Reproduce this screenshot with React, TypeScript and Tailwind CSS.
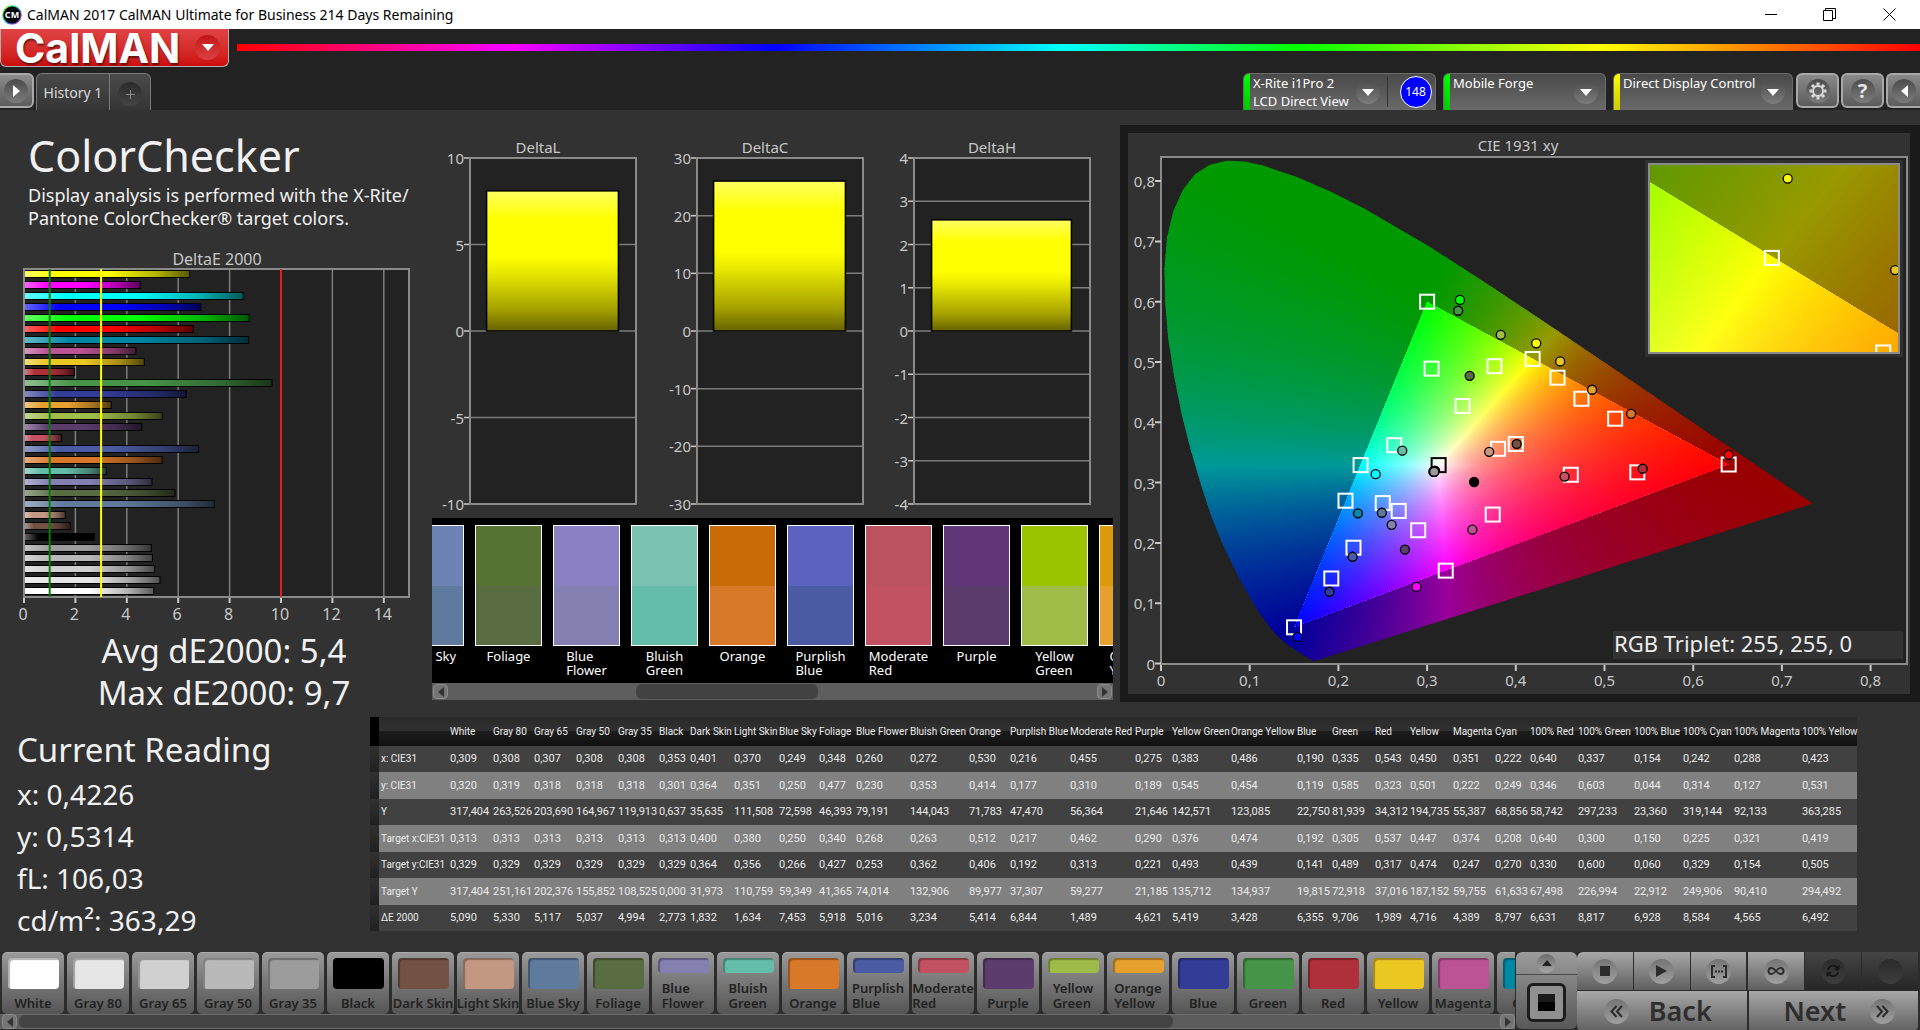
import React from 'react';
import { Infinity as InfinityIcon } from 'lucide-react';
import { FaArrowsRotate } from 'react-icons/fa6';

type Patch = {
  name: string;
  color: string;
  width: number;
  values: string[]; // x, y, Y, target x, target y, target Y, dE
};

const patch = (name: string, color: string, width: number, values: string): Patch => ({
  name,
  color,
  width,
  values: values.split(' '),
});

const patches: Patch[] = [
  patch('White', '#ffffff', 43, '0,309 0,320 317,404 0,313 0,329 317,404 5,090'),
  patch('Gray 80', '#e6e6e6', 41, '0,308 0,319 263,526 0,313 0,329 251,161 5,330'),
  patch('Gray 65', '#d0d0d0', 42, '0,307 0,318 203,690 0,313 0,329 202,376 5,117'),
  patch('Gray 50', '#b9b9b9', 42, '0,308 0,318 164,967 0,313 0,329 155,852 5,037'),
  patch('Gray 35', '#9c9c9c', 41, '0,308 0,318 119,913 0,313 0,329 108,525 4,994'),
  patch('Black', '#000000', 31, '0,353 0,301 0,637 0,313 0,329 0,000 2,773'),
  patch('Dark Skin', '#735244', 44, '0,401 0,364 35,635 0,400 0,364 31,973 1,832'),
  patch('Light Skin', '#c39782', 45, '0,370 0,351 111,508 0,380 0,356 110,759 1,634'),
  patch('Blue Sky', '#5e7a9c', 40, '0,249 0,250 72,598 0,250 0,266 59,349 7,453'),
  patch('Foliage', '#5a6c42', 37, '0,348 0,477 46,393 0,340 0,427 41,365 5,918'),
  patch('Blue Flower', '#8480b1', 54, '0,260 0,230 79,191 0,268 0,253 74,014 5,016'),
  patch('Bluish Green', '#64bda9', 59, '0,272 0,353 144,043 0,263 0,362 132,906 3,234'),
  patch('Orange', '#d87829', 41, '0,530 0,414 71,783 0,512 0,406 89,977 5,414'),
  patch('Purplish Blue', '#4a5ba3', 60, '0,216 0,177 47,470 0,217 0,192 37,307 6,844'),
  patch('Moderate Red', '#c25262', 65, '0,455 0,310 56,364 0,462 0,313 59,277 1,489'),
  patch('Purple', '#5c3c6c', 37, '0,275 0,189 21,646 0,290 0,221 21,185 4,621'),
  patch('Yellow Green', '#9fbb48', 59, '0,383 0,545 142,571 0,376 0,493 135,712 5,419'),
  patch('Orange Yellow', '#e6a02e', 66, '0,486 0,454 123,085 0,474 0,439 134,937 3,428'),
  patch('Blue', '#333c96', 35, '0,190 0,119 22,750 0,192 0,141 19,815 6,355'),
  patch('Green', '#469448', 43, '0,335 0,585 81,939 0,305 0,489 72,918 9,706'),
  patch('Red', '#af303a', 35, '0,543 0,323 34,312 0,537 0,317 37,016 1,989'),
  patch('Yellow', '#ebc721', 43, '0,450 0,501 194,735 0,447 0,474 187,152 4,716'),
  patch('Magenta', '#bb5394', 42, '0,351 0,222 55,387 0,374 0,247 59,755 4,389'),
  patch('Cyan', '#0087a4', 35, '0,222 0,249 68,856 0,208 0,270 61,633 8,797'),
  patch('100% Red', '#ff0000', 48, '0,640 0,346 58,742 0,640 0,330 67,498 6,631'),
  patch('100% Green', '#00ff00', 56, '0,337 0,603 297,233 0,300 0,600 226,994 8,817'),
  patch('100% Blue', '#0000ff', 49, '0,154 0,044 23,360 0,150 0,060 22,912 6,928'),
  patch('100% Cyan', '#00ffff', 51, '0,242 0,314 319,144 0,225 0,329 249,906 8,584'),
  patch('100% Magenta', '#ff00ff', 68, '0,288 0,127 92,133 0,321 0,154 90,410 4,565'),
  patch('100% Yellow', '#ffff00', 57, '0,423 0,531 363,285 0,419 0,505 294,492 6,492'),
];

const rowLabels = ['x: CIE31', 'y: CIE31', 'Y', 'Target x:CIE31', 'Target y:CIE31', 'Target Y', 'ΔE 2000'];

const num = (s: string) => parseFloat(s.replace(',', '.'));
const comma = (n: number) => String(n).replace('.', ',');

/* ---------- title bar ---------- */

function TitleBar() {
  return (
    <div className="flex h-[29px] items-center bg-white pl-[2px] text-black">
      <svg width="20" height="20" viewBox="0 0 20 20">
        <defs>
          <linearGradient id="ring" x1="0" y1="0" x2="1" y2="1">
            <stop offset="0" stopColor="#ffe600" />
            <stop offset="0.3" stopColor="#20e060" />
            <stop offset="0.6" stopColor="#2080ff" />
            <stop offset="1" stopColor="#ff20a0" />
          </linearGradient>
        </defs>
        <circle cx="10" cy="10" r="9.800" fill="url(#ring)" />
        <circle cx="10" cy="10" r="8.600" fill="#000" />
        <text x="10" y="13" textAnchor="middle" fill="#fff" fontSize="9" fontWeight="700">CM</text>
      </svg>
      <span className="ml-[5px] text-[14px]">CalMAN 2017 CalMAN Ultimate for Business 214 Days Remaining</span>
      <div className="ml-auto flex">
        <button aria-label="Minimize" className="flex h-[29px] w-[58px] items-center justify-center">
          <svg width="12" height="12"><path d="M0 5.500h12" stroke="#000" /></svg>
        </button>
        <button aria-label="Restore" className="flex h-[29px] w-[58px] items-center justify-center">
          <svg width="13" height="13" fill="none" stroke="#000"><path d="M.5 2.500h9v10h-9zM2.500 2.500v-2h10v10h-3" /></svg>
        </button>
        <button aria-label="Close" className="flex h-[29px] w-[62px] items-center justify-center">
          <svg width="13" height="13" stroke="#000"><path d="M.5 .5l12 12M12.500 .5l-12 12" /></svg>
        </button>
      </div>
    </div>
  );
}

/* ---------- header ---------- */

function Knob({ children }: { children?: React.ReactNode }) {
  return (
    <span className="flex size-6 shrink-0 items-center justify-center rounded-full bg-linear-to-b from-[#4c4c4c] to-[#7c7c7c] text-white">
      {children}
    </span>
  );
}

const Down = () => (
  <svg width="12" height="7"><path d="M0 0h12L6 7z" fill="#fff" /></svg>
);

function DeviceTab({ lines, accent, children }: { lines: string[]; accent: string; children?: React.ReactNode }) {
  return (
    <div className="flex h-[37px] overflow-hidden rounded-t-[6px] border border-b-0 border-[#6c6c6c] bg-linear-to-b from-[#4a4a4a] to-[#6a6a6a]">
      <span className={`w-[6px] shrink-0 ${accent}`} />
      <button className="flex min-w-0 flex-1 items-center justify-between pr-[7px] pl-[3px] text-left">
        <span className="self-start text-[13px] leading-[18px] whitespace-nowrap">
          {lines.map(l => (
            <span key={l} className="block">{l}</span>
          ))}
        </span>
        <Knob><Down /></Knob>
      </button>
      {children}
    </div>
  );
}

const toolBtn =
  'flex h-[35px] w-[43px] items-center justify-center rounded-[6px] border-2 border-[#a8a8a8] bg-linear-to-b from-[#8a8a8a] to-[#5c5c5c]';

function Header() {
  return (
    <header className="bg-[#222222]">
      <div className="flex h-11 items-start gap-2">
        <button className="flex h-[38px] w-[229px] items-center justify-between rounded-b-[6px] border border-t-0 border-[#b0b0b0] bg-linear-to-b from-[#e04343] to-[#cc0c0c] pr-2 pl-[14px]">
          <span className="font-['Inter'] text-[41px] leading-[36px] font-bold [text-shadow:1px_2px_2px_rgba(0,0,0,0.5)]">CalMAN</span>
          <span className="flex size-[25px] items-center justify-center rounded-full bg-linear-to-b from-[#c01018] to-[#dd4040]"><Down /></span>
        </button>
        <div className="mt-[15px] h-[7px] flex-1 bg-[linear-gradient(90deg,#f00,#f0f_16%,#00f_32%,#0ff_49%,#0f0_63%,#ff0_81%,#f00)]" />
      </div>
      <div className="flex h-[37px] items-start">
        <button aria-label="Expand" className="flex h-[35px] w-[34px] items-center justify-center rounded-r-[6px] border-2 border-l-0 border-[#a8a8a8] bg-linear-to-b from-[#8c8c8c] to-[#5c5c5c]">
          <Knob><svg width="7" height="12"><path d="M0 0v12l7-6z" fill="#fff" /></svg></Knob>
        </button>
        <div className="ml-[2px] flex h-[37px] rounded-t-[6px] border border-b-0 border-[#7a7a7a] bg-linear-to-b from-[#4a4a4a] to-[#353535] text-[#d8d8d8]">
          <button className="w-[73px] border-r border-[#7a7a7a] text-[14px]">History 1</button>
          <button aria-label="Add tab" className="flex w-[40px] items-center justify-center pt-1">
            <span className="flex size-6 items-center justify-center rounded-full bg-linear-to-b from-[#2c2c2c] to-[#444444]">
              <svg width="9" height="9"><path d="M0 4.500h9M4.500 0v9" stroke="#888" /></svg>
            </span>
          </button>
        </div>
        <div className="ml-auto flex items-start">
          <div className="mr-[7px] w-[193px]">
            <DeviceTab lines={['X-Rite i1Pro 2', 'LCD Direct View']} accent="bg-linear-to-b from-[#00ff00] to-[#00c800]">
              <span className="my-[3px] w-px bg-[#333]" />
              <span className="flex w-[47px] items-center justify-center pl-2">
                <span className="flex size-8 items-center justify-center rounded-full border border-white bg-[#0000ff] text-[12px]">148</span>
              </span>
            </DeviceTab>
          </div>
          <div className="mr-[7px] w-[163px]">
            <DeviceTab lines={['Mobile Forge']} accent="bg-linear-to-b from-[#00ff00] to-[#00c800]" />
          </div>
          <div className="mr-[3px] w-[180px]">
            <DeviceTab lines={['Direct Display Control']} accent="bg-linear-to-b from-[#ffff00] to-[#d0c800]" />
          </div>
          <div className="flex gap-[2px]">
            <button aria-label="Settings" className={toolBtn}>
              <Knob>
                <svg width="18" height="18" viewBox="-9 -9 18 18" stroke="#d8d8d8" fill="none">
                  <circle r="5" strokeWidth="2" />
                  {[0, 45, 90, 135, 180, 225, 270, 315].map(a => (
                    <path key={a} d="M0 -5.500V-8.500" strokeWidth="3" transform={`rotate(${a})`} />
                  ))}
                </svg>
              </Knob>
            </button>
            <button aria-label="Help" className={toolBtn}>
              <Knob><span className="text-[20px] leading-6 font-bold text-[#e4e4e4]">?</span></Knob>
            </button>
            <button aria-label="Collapse" className="flex h-[35px] w-[34px] items-center justify-center rounded-l-[6px] border-2 border-r-0 border-[#a8a8a8] bg-linear-to-b from-[#8a8a8a] to-[#5c5c5c]">
              <Knob><svg width="7" height="12"><path d="M7 0v12L0 6z" fill="#fff" /></svg></Knob>
            </button>
          </div>
        </div>
      </div>
    </header>
  );
}

/* ---------- charts ---------- */

function shade(hex: string, k: number) {
  const n = parseInt(hex.slice(1), 16);
  const mix = (c: number) => Math.round(k > 0 ? c + (255 - c) * k : c * (1 + k));
  return `rgb(${mix(n >> 16)},${mix((n >> 8) & 255)},${mix(n & 255)})`;
}

function DeltaEChart() {
  const x = (v: number) => 24 + v * 25.7;
  const bars = [...patches].reverse();
  return (
    <svg viewBox="0 0 432 380" className="mt-[14px] block w-full" fontSize="16" fill="#c8c8c8">
      <defs>
        {bars.map((p, i) => (
          <linearGradient key={p.name} id={`bar${i}`}>
            <stop offset="0" stopColor={shade(p.color, 0.4)} />
            <stop offset="0.2" stopColor={p.color} />
            <stop offset="0.5" stopColor={p.color} />
            <stop offset="0.8" stopColor={shade(p.color, -0.3)} />
            <stop offset="1" stopColor={shade(p.color, -0.65)} />
          </linearGradient>
        ))}
      </defs>
      <text x="217" y="21" textAnchor="middle">DeltaE 2000</text>
      <rect x="24" y="25" width="385" height="328" fill="#222222" />
      {[2, 4, 6, 8, 12, 14].map(v => (
        <path key={v} d={`M${x(v)} 25V353`} stroke="#7c7c7c" strokeWidth="1.500" />
      ))}
      {bars.map((p, i) => (
        <rect
          key={p.name}
          x="24.500"
          y={Math.round(26 + i * 10.94) + 0.5}
          width={num(p.values[6]) * 25.6 - 1}
          height="7"
          fill={`url(#bar${i})`}
          stroke="#000"
        />
      ))}
      <rect x="24" y="25" width="385" height="328" fill="none" stroke="#8a8a8a" strokeWidth="2" />
      <path d={`M${x(1)} 25V353`} stroke="#0a7a0a" strokeWidth="2" />
      <path d={`M${x(3)} 25V353`} stroke="#ffff00" strokeWidth="2" />
      <path d={`M${x(10)} 25V353`} stroke="#e02020" strokeWidth="2" />
      {[0, 2, 4, 6, 8, 10, 12, 14].map(v => (
        <g key={v}>
          <path d={`M${x(v)} 354v5`} stroke="#c8c8c8" strokeWidth="2" />
          <text x={x(v) - 1} y="376" textAnchor="middle">{v}</text>
        </g>
      ))}
    </svg>
  );
}

type DeltaProps = { title: string; titleX: number; left: number; width: number; max: number; step: number; value: number };

function DeltaPlot({ title, titleX, left, width, max, step, value }: DeltaProps) {
  const y = (v: number) => 206 - (v / max) * 173;
  const ticks: number[] = [];
  for (let v = -max; v <= max; v += step) ticks.push(v);
  return (
    <g>
      <text x={titleX} y="28" textAnchor="middle">{title}</text>
      <rect x={left} y="33" width={width} height="346" fill="#222222" />
      {ticks.map(v => (
        <g key={v}>
          <path d={`M${left} ${y(v)}h${width}`} stroke="#7c7c7c" strokeWidth="1.500" />
          <path d={`M${left - 6} ${y(v)}h6`} stroke="#c8c8c8" strokeWidth="1.500" />
          <text x={left - 6} y={y(v) + 6} textAnchor="end">{v}</text>
        </g>
      ))}
      <rect x={left} y="33" width={width} height="346" fill="none" stroke="#8a8a8a" strokeWidth="2" />
      <rect x={left + width * 0.1} y={y(value)} width={width * 0.8 - 1} height={206 - y(value)} fill="url(#yellowBar)" stroke="#000" strokeWidth="1.500" />
    </g>
  );
}

function DeltaCharts() {
  return (
    <svg viewBox="0 0 688 393" className="block w-full" fontSize="15" fill="#c8c8c8">
      <defs>
        <linearGradient id="yellowBar" x1="0" y1="0" x2="0" y2="1">
          <stop offset="0" stopColor="#ffff60" />
          <stop offset="0.2" stopColor="#ffff00" />
          <stop offset="0.47" stopColor="#ffff00" />
          <stop offset="0.6" stopColor="#e4e400" />
          <stop offset="0.85" stopColor="#a4a000" />
          <stop offset="1" stopColor="#666200" />
        </linearGradient>
      </defs>
      <DeltaPlot title="DeltaL" titleX={106} left={38} width={166} max={10} step={5} value={8.1} />
      <DeltaPlot title="DeltaC" titleX={333} left={265} width={166} max={30} step={10} value={26} />
      <DeltaPlot title="DeltaH" titleX={560} left={482} width={176} max={4} step={1} value={2.57} />
    </svg>
  );
}

/* ---------- swatch strip ---------- */

const measured: { name: string[]; top: string; target: string }[] = [
  { name: ['Foliage'], top: '#567331', target: '#5a6c42' },
  { name: ['Blue', 'Flower'], top: '#8b80c4', target: '#8480b1' },
  { name: ['Bluish', 'Green'], top: '#7cc2b3', target: '#64bda9' },
  { name: ['Orange'], top: '#c96c08', target: '#d87829' },
  { name: ['Purplish', 'Blue'], top: '#5c62bf', target: '#4a5ba3' },
  { name: ['Moderate', 'Red'], top: '#bb525f', target: '#c25262' },
  { name: ['Purple'], top: '#61377a', target: '#5c3c6c' },
  { name: ['Yellow', 'Green'], top: '#9ac400', target: '#9fbb48' },
  { name: ['Orange', 'Yellow'], top: '#dc9a08', target: '#e6a02e' },
];

function Swatch({ name, top, target }: { name: string[]; top: string; target: string }) {
  return (
    <div className="flex w-[67px] shrink-0 flex-col items-center">
      <div className="flex h-[121px] w-full flex-col border border-white">
        <div className="flex-1" style={{ backgroundColor: top }} />
        <div className="flex-1" style={{ backgroundColor: target }} />
      </div>
      <div className="mt-[3px] text-[13px] leading-[14px] whitespace-nowrap text-white">
        {name.map(n => (
          <div key={n}>{n}</div>
        ))}
      </div>
    </div>
  );
}

function ScrollButton({ dir, label }: { dir: 'left' | 'right'; label: string }) {
  return (
    <button aria-label={label} className="flex size-[15px] shrink-0 items-center justify-center rounded-[4px] border border-[#8c8c8c] bg-[#747474]">
      <svg width="6" height="10"><path d={dir === 'left' ? 'M6 0v10L0 5z' : 'M0 0v10l6-5z'} fill="#333" /></svg>
    </button>
  );
}

function SwatchStrip() {
  return (
    <div className="mr-[7px]">
      <div className="flex h-[165px] justify-start gap-[11px] overflow-hidden bg-black pt-[7px]">
        <div className="flex w-8 shrink-0 justify-end">
          <Swatch name={['Blue Sky']} top="#6e83b5" target="#5e7a9c" />
        </div>
        {measured.map(m => (
          <Swatch key={m.name.join(' ')} {...m} />
        ))}
      </div>
      <div className="flex h-[17px] items-center bg-[#5e5e5e] px-px">
        <ScrollButton dir="left" label="Scroll swatches left" />
        <div className="flex flex-1">
          <div className="w-[29%]" />
          <div className="h-[15px] w-[28%] rounded-[6px] bg-[#424242]" />
        </div>
        <ScrollButton dir="right" label="Scroll swatches right" />
      </div>
    </div>
  );
}

/* ---------- CIE diagram ---------- */

type Pt = [number, number];

const R: Pt = [0.64, 0.33];
const G: Pt = [0.3, 0.6];
const B: Pt = [0.15, 0.06];
const W: Pt = [0.3127, 0.329];

const locus: Pt[] = [
  [0.1741, 0.005], [0.1714, 0.0051], [0.1644, 0.0109], [0.1566, 0.0177], [0.144, 0.0297], [0.1355, 0.0399],
  [0.1241, 0.0578], [0.1096, 0.0868], [0.0913, 0.1327], [0.08, 0.1655], [0.0687, 0.2007], [0.0565, 0.245],
  [0.0454, 0.295], [0.034, 0.352], [0.0235, 0.4127], [0.015, 0.475], [0.0082, 0.5384], [0.0048, 0.598],
  [0.0039, 0.6548], [0.0068, 0.706], [0.0139, 0.7502], [0.025, 0.786], [0.0389, 0.812], [0.055, 0.827],
  [0.0743, 0.8338], [0.094, 0.8325], [0.1142, 0.8262], [0.1547, 0.8059], [0.1929, 0.7816], [0.2296, 0.7543],
  [0.3016, 0.6923], [0.3731, 0.6245], [0.4441, 0.5547], [0.5125, 0.4866], [0.5752, 0.4242], [0.627, 0.3725],
  [0.6658, 0.334], [0.6915, 0.3083], [0.7347, 0.2653],
];

const lerp = (a: Pt, b: Pt, t: number): Pt => [a[0] + (b[0] - a[0]) * t, a[1] + (b[1] - a[1]) * t];

// chromaticity to the brightest displayable rgb
function xyColor([x, y]: Pt, gain = 1) {
  const X = x / y;
  const Z = (1 - x - y) / y;
  const rgb = [
    3.2406 * X - 1.5372 - 0.4986 * Z,
    -0.9689 * X + 1.8758 + 0.0415 * Z,
    0.0557 * X - 0.204 + 1.057 * Z,
  ].map(c => Math.max(0, c));
  const m = Math.max(...rgb);
  return `rgb(${rgb.map(c => Math.round((c / m) * 255 * gain)).join(',')})`;
}

const edges: { id: string; a: Pt; b: Pt; opposite: Pt }[] = [
  { id: 'rg', a: R, b: G, opposite: B },
  { id: 'gb', a: G, b: B, opposite: R },
  { id: 'br', a: B, b: R, opposite: G },
];

const corners: { at: Pt; from: [Pt, Pt]; fill: string }[] = [
  { at: G, from: [R, B], fill: '#009900' },
  { at: B, from: [R, G], fill: '#000099' },
  { at: R, from: [G, B], fill: '#990000' },
];

function Gamut({ id, steps, project }: { id: string; steps: number; project: (p: Pt) => Pt }) {
  const pts = (list: Pt[]) => list.map(p => project(p).map(n => n.toFixed(2)).join(',')).join(' ');
  return (
    <g>
      <clipPath id={`${id}-locus`}><polygon points={pts(locus)} /></clipPath>
      <clipPath id={`${id}-tri`}><polygon points={pts([R, G, B])} /></clipPath>
      <g clipPath={`url(#${id}-locus)`} shapeRendering="crispEdges">
        {corners.map(c => (
          <polygon
            key={c.fill}
            points={pts([c.at, lerp(c.from[0], c.at, 4), lerp(c.from[1], c.at, 4)])}
            fill={c.fill}
            stroke={c.fill}
            strokeWidth="3"
          />
        ))}
        {edges.map(e =>
          Array.from({ length: steps }, (_, i) => {
            const p = lerp(e.a, e.b, i / steps);
            const q = lerp(e.a, e.b, Math.min(1, (i + 1.5) / steps));
            return (
              <polygon
                key={e.id + i}
                points={pts([lerp(e.opposite, p, 0.95), lerp(e.opposite, q, 0.95), lerp(e.opposite, q, 4), lerp(e.opposite, p, 4)])}
                fill={xyColor(lerp(e.a, e.b, (i + 0.5) / steps), 0.6)}
              />
            );
          })
        )}
      </g>
      <g clipPath={`url(#${id}-tri)`} shapeRendering="crispEdges">
        <polygon points={pts([R, G, B])} fill="#fff" />
        {edges.map(e => {
          // gradient axis is perpendicular to the edge, so every wedge reaches full saturation on it
          const [ax, ay] = project(e.a);
          const [bx, by] = project(e.b);
          const [wx, wy] = project(W);
          const k = ((wx - ax) * (bx - ax) + (wy - ay) * (by - ay)) / ((bx - ax) ** 2 + (by - ay) ** 2);
          return Array.from({ length: steps }, (_, i) => {
            const p = lerp(e.a, e.b, i / steps);
            const q = lerp(e.a, e.b, Math.min(1.01, (i + 1.5) / steps));
            const mid = lerp(e.a, e.b, (i + 0.5) / steps);
            return (
              <g key={e.id + i}>
                <linearGradient
                  id={`${id}-${e.id}${i}`}
                  gradientUnits="userSpaceOnUse"
                  x1={wx}
                  y1={wy}
                  x2={ax + (bx - ax) * k}
                  y2={ay + (by - ay) * k}
                >
                  {[0, 0.15, 0.3, 0.5, 0.7, 0.85, 1].map(t => (
                    <stop key={t} offset={t} stopColor={xyColor(lerp(W, mid, t))} />
                  ))}
                </linearGradient>
                <polygon points={pts([W, lerp(W, p, 1.05), lerp(W, q, 1.05)])} fill={`url(#${id}-${e.id}${i})`} />
              </g>
            );
          });
        })}
      </g>
    </g>
  );
}

function Markers({ project }: { project: (p: Pt) => Pt }) {
  return (
    <g>
      {patches.slice(6).map(p => {
        const [x, y] = project([num(p.values[3]), num(p.values[4])]);
        return <rect key={p.name} x={x - 7} y={y - 7} width="14" height="14" fill="none" stroke="#fff" strokeWidth="2" />;
      })}
      {patches.slice(0, 1).map(p => {
        const [x, y] = project([num(p.values[3]), num(p.values[4])]);
        return <rect key={p.name} x={x - 7} y={y - 7} width="14" height="14" fill="none" stroke="#000" strokeWidth="2" />;
      })}
      {patches.map(p => {
        const [x, y] = project([num(p.values[0]), num(p.values[1])]);
        return <circle key={p.name} cx={x} cy={y} r="4.500" fill={p.color} stroke="#000" strokeWidth="1.300" />;
      })}
    </g>
  );
}

function CieChart() {
  const project = ([x, y]: Pt): Pt => [33 + x * 887, 530.5 - y * 603];
  const zoomed = ([x, y]: Pt): Pt => [125 + (x - 0.4193) * 3980, 94 - (y - 0.5053) * 3050];
  const ticks = [0, 0.1, 0.2, 0.3, 0.4, 0.5, 0.6, 0.7, 0.8];
  return (
    <div className="bg-[#1a1a1a] p-[8px] pr-[10px]">
      <svg viewBox="0 0 782 561" className="block w-full bg-[#323232]" fontSize="15" fill="#c8c8c8">
        <text x="390" y="18" textAnchor="middle">CIE 1931 xy</text>
        <rect x="33" y="24" width="746" height="507" fill="#222222" />
        <Gamut id="cie" steps={180} project={project} />
        <rect x="33" y="24" width="746" height="507" fill="none" stroke="#8a8a8a" strokeWidth="2" />
        {ticks.map(t => {
          const [x, y] = project([t, t]);
          return (
            <g key={t}>
              <path d={`M27 ${y}h6M${x} 532v6`} stroke="#c8c8c8" strokeWidth="2" />
              <text x="27" y={y + 6} textAnchor="end">{comma(t)}</text>
              <text x={x} y="553" textAnchor="middle">{comma(t)}</text>
            </g>
          );
        })}
        <Markers project={project} />
        <rect x="517" y="27" width="258" height="197" fill="#303030" />
        <svg x="520" y="30" width="252" height="191">
          <Gamut id="zoom" steps={400} project={zoomed} />
          <Markers project={zoomed} />
          <rect x="1" y="1" width="250" height="189" fill="none" stroke="#8a8a8a" strokeWidth="2" />
        </svg>
        <rect x="485" y="498" width="290" height="28" fill="#323232" />
        <text x="486" y="519" fontSize="22" fill="#ececec">RGB Triplet: 255, 255, 0</text>
      </svg>
    </div>
  );
}

/* ---------- readings table ---------- */

function ReadingsTable() {
  const total = patches.reduce((sum, p) => sum + p.width, 78);
  const pct = (w: number) => ({ width: `${(w / total) * 100}%` });
  return (
    <table className="w-full table-fixed border-collapse text-left font-['Roboto','Noto_Sans',sans-serif] text-[11px] leading-[16px] whitespace-nowrap text-[#ececec]">
      <colgroup>
        <col style={pct(9)} />
        <col style={pct(69)} />
        {patches.map(p => (
          <col key={p.name} style={pct(p.width)} />
        ))}
      </colgroup>
      <thead>
        <tr className="h-[29px] bg-[linear-gradient(#2a2a2a_0%,#303030_48%,#1c1c1c_49%,#111111_100%)]">
          <td className="bg-black p-0" />
          <td className="p-0" />
          {patches.map(p => (
            <th key={p.name} scope="col" className="p-0 pl-[2px] text-[10px] font-normal">{p.name}</th>
          ))}
        </tr>
      </thead>
      <tbody>
        {rowLabels.map((label, r) => (
          <tr key={label} className="bg-[#414141] odd:h-[26px] even:h-[27px] even:bg-[#808080] last:h-[27px]">
            <td className="bg-linear-to-b from-[#303030] to-[#202020] p-0" />
            <th scope="row" className="p-0 pl-[2px] text-[10px] font-normal">{label}</th>
            {patches.map(p => (
              <td key={p.name} className="p-0 pl-[2px]">{p.values[r]}</td>
            ))}
          </tr>
        ))}
      </tbody>
    </table>
  );
}

/* ---------- footer ---------- */

function PatchButton({ name, color }: { name: string; color: string }) {
  const twoLines = ['Blue Flower', 'Bluish Green', 'Purplish Blue', 'Moderate Red', 'Yellow Green', 'Orange Yellow'].includes(name);
  const lines = twoLines ? name.split(' ') : [name];
  return (
    <button className="flex h-[62px] w-[62px] shrink-0 flex-col items-center justify-between rounded-[5px] border-t border-[#aaaaaa] bg-linear-to-b from-[#999999] to-[#555555] pt-[5px] pb-[3px] text-[#222222]">
      <span
        className={`w-[51px] rounded-[4px] shadow-[inset_2px_2px_1px_rgba(0,0,0,0.3)] ${twoLines ? 'h-[15px]' : 'h-[31px]'}`}
        style={{ backgroundColor: color }}
      />
      <span className="text-left text-[13px] leading-[15px] font-semibold whitespace-nowrap">
        {lines.map(l => (
          <span key={l} className="block">{l}</span>
        ))}
      </span>
    </button>
  );
}

const ctrl = 'flex min-w-0 flex-1 items-center justify-center bg-linear-to-b from-[#a8a8a8] to-[#606060]';
const ctrlOff = 'flex min-w-0 flex-1 items-center justify-center bg-linear-to-b from-[#454545] to-[#262626]';
const ring = 'flex size-[25px] items-center justify-center rounded-full bg-linear-to-b from-[#747474] to-[#a0a0a0] text-[#2c2c2c]';
const ringOff = 'flex size-[25px] items-center justify-center rounded-full bg-linear-to-b from-[#2a2a2a] to-[#3e3e3e] text-[#161616]';

function Footer() {
  return (
    <footer className="flex h-[78px] items-start bg-[#2c2c2c]">
      <div className="min-w-0 flex-1">
        <div className="flex gap-[3px] overflow-hidden pl-[2px]">
          {patches.slice(0, 24).map(p => (
            <PatchButton key={p.name} name={p.name} color={p.color} />
          ))}
        </div>
        <div className="flex h-[15px] items-center gap-[2px] border-y border-[#6c6c6c] bg-[#5c5c5c] pl-[2px]">
          <ScrollButton dir="left" label="Scroll patches left" />
          <div className="flex-1">
            <div className="h-[13px] w-[78%] rounded-[6px] bg-[#434343]" />
          </div>
          <ScrollButton dir="right" label="Scroll patches right" />
        </div>
      </div>
      <div className="ml-px flex h-[77px] w-[61px] shrink-0 flex-col overflow-hidden rounded-[6px] bg-linear-to-b from-[#9c9c9c] to-[#585858]">
        <button aria-label="Show patterns" className="flex h-[23px] shrink-0 items-center justify-center border-b border-[#4a4a4a]">
          <span className="flex size-[19px] items-center justify-center rounded-full bg-linear-to-b from-[#6c6c6c] to-[#a8a8a8]">
            <svg width="10" height="6"><path d="M0 6h10L5 0z" fill="#222" /></svg>
          </span>
        </button>
        <button aria-label="Pattern window" className="mx-auto mt-2 flex size-[39px] shrink-0 items-center justify-center rounded-[6px] border-[3px] border-[#1c1c1c] bg-[#909090]">
          <span className="size-[17px] bg-linear-to-b from-[#1a1a1a] from-50% to-black to-50%" />
        </button>
      </div>
      <div className="mr-[2px] flex h-[77px] w-[341px] shrink-0 flex-col gap-px">
        <div className="flex h-[38px] gap-px">
          <button aria-label="Stop" className={`${ctrl} rounded-tl-[6px]`}>
            <span className={ring}><svg width="10" height="10"><path d="M0 0h10v10H0z" fill="currentColor" /></svg></span>
          </button>
          <button aria-label="Play" className={ctrl}>
            <span className={ring}><svg width="11" height="12"><path d="M0 0v12l11-6z" fill="currentColor" /></svg></span>
          </button>
          <button aria-label="Read series" className={ctrl}>
            <span className={ring}>
              <svg width="16" height="13" fill="none" stroke="currentColor" strokeWidth="2">
                <path d="M4 1H1v11h3M12 1h3v11h-3" /><path d="M4 6.500h8" strokeDasharray="2 1" />
              </svg>
            </span>
          </button>
          <button aria-label="Read continuously" className={`${ctrl} ml-px`}>
            <span className={ring}><InfinityIcon size={18} strokeWidth={2.500} /></span>
          </button>
          <button aria-label="Refresh" className={ctrlOff}>
            <span className={ringOff}><FaArrowsRotate size={14} /></span>
          </button>
          <button aria-label="Unused" className={ctrlOff}><span className={ringOff} /></button>
        </div>
        <div className="grid h-[38px] grid-cols-2 gap-[2px] text-[27px] font-semibold text-[#2e2e2e]">
          <button className={`${ctrl} gap-5 rounded-bl-[6px] pr-2`}>
            <span className={ring}>
              <svg width="13" height="13" fill="none" stroke="currentColor" strokeWidth="2"><path d="M6.500 1L1.500 6.500l5 5.500M12 1L7 6.500l5 5.500" /></svg>
            </span>
            Back
          </button>
          <button className={`${ctrl} gap-6 rounded-br-[6px] pl-3`}>
            Next
            <span className={ring}>
              <svg width="13" height="13" fill="none" stroke="currentColor" strokeWidth="2"><path d="M1 1l5 5.500L1 12M6.500 1l5 5.500-5 5.500" /></svg>
            </span>
          </button>
        </div>
      </div>
    </footer>
  );
}

export default function App() {
  return (
    <div className="flex min-h-screen flex-col overflow-x-hidden bg-[#323232] font-['Noto_Sans','Open_Sans',sans-serif] text-white">
      <TitleBar />
      <Header />
      <main className="flex-1 text-[#f0f0f0]">
        <div className="grid grid-cols-[432fr_688fr_800fr] items-start">
          <section className="min-w-0 pt-[22px]">
            <h1 className="pl-7 text-[43px] leading-[48px]">ColorChecker</h1>
            <p className="mt-1 pl-7 text-[18px] leading-[23px] whitespace-nowrap">
              Display analysis is performed with the X-Rite/
              <br />
              Pantone ColorChecker® target colors.
            </p>
            <DeltaEChart />
            <div className="mt-[6px] pl-4 text-center text-[33px] leading-[42px]">
              <p>Avg dE2000: 5,4</p>
              <p>Max dE2000: 9,7</p>
            </div>
          </section>
          <section className="min-w-0 pt-[15px]">
            <DeltaCharts />
            <SwatchStrip />
          </section>
          <section className="min-w-0 pt-[15px]">
            <CieChart />
          </section>
        </div>
        <div className="flex items-start pt-[3px]">
          <section className="w-[370px] shrink-0 pt-[12px] pl-[17px] text-[28px] leading-[42px]">
            <h2 className="mb-[2px] text-[33px]">Current Reading</h2>
            <p>x: 0,4226</p>
            <p>y: 0,5314</p>
            <p>fL: 106,03</p>
            <p>cd/m²: 363,29</p>
          </section>
          <div className="mr-[63px] min-w-0 flex-1">
            <ReadingsTable />
          </div>
        </div>
      </main>
      <Footer />
    </div>
  );
}
